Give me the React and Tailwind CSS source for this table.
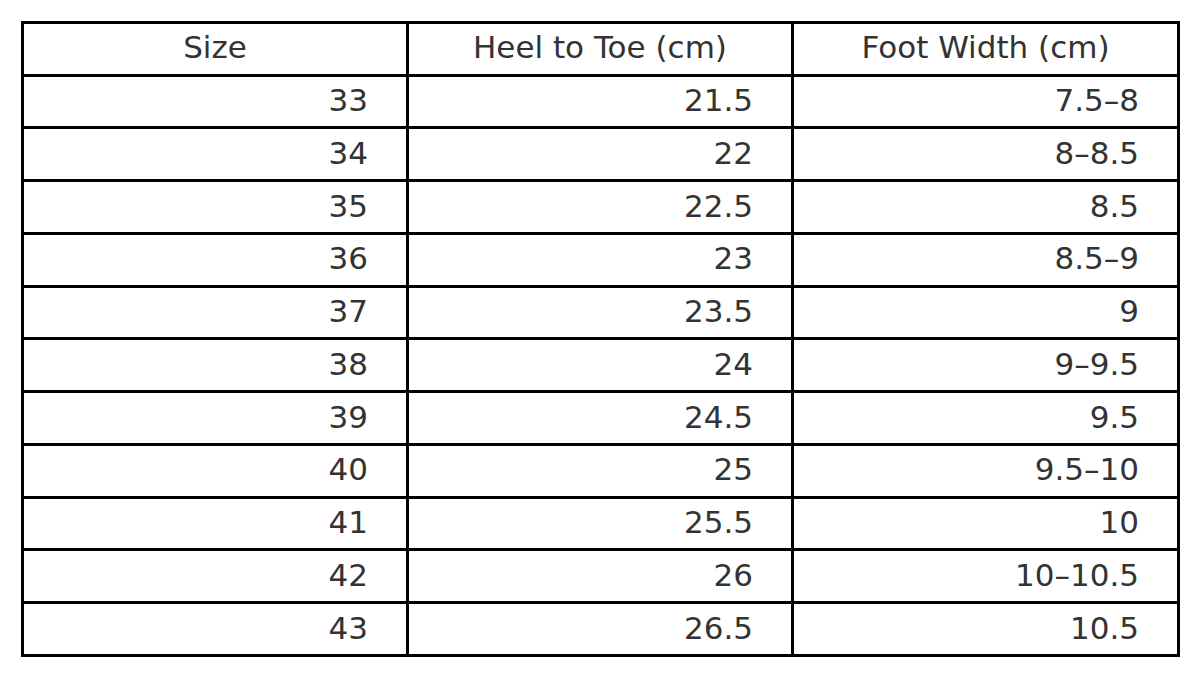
import React from 'react'

const rows = [
  ['33', '21.5', '7.5–8'],
  ['34', '22', '8–8.5'],
  ['35', '22.5', '8.5'],
  ['36', '23', '8.5–9'],
  ['37', '23.5', '9'],
  ['38', '24', '9–9.5'],
  ['39', '24.5', '9.5'],
  ['40', '25', '9.5–10'],
  ['41', '25.5', '10'],
  ['42', '26', '10–10.5'],
  ['43', '26.5', '10.5'],
]

function App() {
  return (
    <div className="min-h-screen bg-white pt-[21px] pl-[21px]" style={{ fontFamily: '"DejaVu Sans", sans-serif' }}>
      <div className="w-[1159px] border-[3px] border-black text-[31px] text-[#333]">
        <div className="grid grid-cols-[385px_385px_383px] h-[52.5px] border-b-[3px] border-black">
          <div className="flex items-center justify-center pb-[3px] border-r-[3px] border-black">Size</div>
          <div className="flex items-center justify-center pb-[3px] border-r-[3px] border-black">Heel to Toe (cm)</div>
          <div className="flex items-center justify-center pb-[3px]">Foot Width (cm)</div>
        </div>
        {rows.map((row, i) => (
          <div
            key={row[0]}
            className={
              i < rows.length - 1
                ? 'grid grid-cols-[385px_385px_383px] h-[52.75px] border-b-[3px] border-black'
                : 'grid grid-cols-[385px_385px_383px] h-[49.75px]'
            }
          >
            <div className="flex items-center justify-end pr-[38px] pb-[2px] border-r-[3px] border-black">{row[0]}</div>
            <div className="flex items-center justify-end pr-[38px] pb-[2px] border-r-[3px] border-black">{row[1]}</div>
            <div className="flex items-center justify-end pr-[38px] pb-[2px]">{row[2]}</div>
          </div>
        ))}
      </div>
    </div>
  )
}

export default App
